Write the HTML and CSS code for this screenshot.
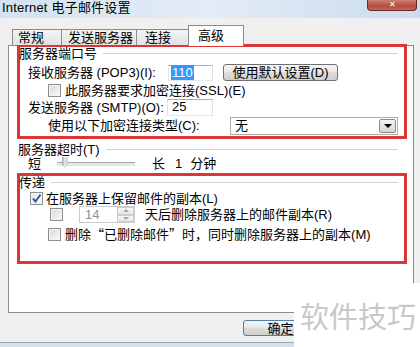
FILE: index.html
```html
<!DOCTYPE html>
<html lang="zh-CN">
<head>
    <meta charset="UTF-8">
    <meta name="viewport" content="width=device-width, initial-scale=1.0">
    <title>Internet 电子邮件设置</title>
    <link rel="stylesheet" href="styles.css">
</head>
<body>
    <div class="window">
        <div class="titlebar">
            <span class="title">Internet 电子邮件设置</span>
            <span class="close-btn">✕</span>
        </div>
        <div class="dialog">
            <div class="tabs">
                <div class="tab tab-1">常规</div>
                <div class="tab tab-2">发送服务器</div>
                <div class="tab tab-3">连接</div>
                <div class="tab tab-active">高级</div>
            </div>
            <div class="panel">
                <div class="mark mark-ports">
                    <div class="legend"><span>服务器端口号</span><i class="legend-line"></i></div>
                    <div class="row row-pop">
                        <span class="lbl lbl-pop">接收服务器 (POP3)(I):</span>
                        <div class="input input-pop"><span class="sel">110</span></div>
                        <button class="btn btn-default">使用默认设置(D)</button>
                    </div>
                    <div class="row row-ssl">
                        <span class="checkbox"></span>
                        <span class="cb-text">此服务器要求加密连接(SSL)(E)</span>
                    </div>
                    <div class="row row-smtp">
                        <span class="lbl lbl-smtp">发送服务器 (SMTP)(O):</span>
                        <div class="input input-smtp">25</div>
                    </div>
                    <div class="row row-enc">
                        <span class="lbl lbl-enc">使用以下加密连接类型(C):</span>
                        <div class="select"><span>无</span><span class="select-arrow"></span></div>
                    </div>
                </div>

                <div class="legend legend-timeout"><span>服务器超时(T)</span><i class="legend-line"></i></div>
                <div class="row row-slider">
                    <span>短</span>
                    <div class="slider"><span class="slider-thumb"></span></div>
                    <span class="long">长</span>
                    <span class="num">1</span>
                    <span class="unit">分钟</span>
                </div>

                <div class="mark mark-deliver">
                    <div class="legend"><span>传递</span><i class="legend-line"></i></div>
                    <div class="row row-keep">
                        <span class="checkbox checked">
                            <svg width="11" height="11" viewBox="0 0 11 11"><path d="M2 5.5 L4.5 8.5 L9.5 1.5" fill="none" stroke="#3f5a9a" stroke-width="2"/></svg>
                        </span>
                        <span class="cb-text">在服务器上保留邮件的副本(L)</span>
                    </div>
                    <div class="row row-days">
                        <span class="checkbox"></span>
                        <div class="spin">
                            <span class="spin-value">14</span>
                            <span class="spin-btns">
                                <span class="spin-up"></span>
                                <span class="spin-down"></span>
                            </span>
                        </div>
                        <span class="days-text">天后删除服务器上的邮件副本(R)</span>
                    </div>
                    <div class="row row-del">
                        <span class="checkbox"></span>
                        <span class="cb-text">删除<span class="q">“</span>已删除邮件<span class="q">”</span>时，同时删除服务器上的副本(M)</span>
                    </div>
                </div>
            </div>
            <div class="footer">
                <button class="btn btn-ok">确定</button>
            </div>
        </div>
        <div class="frame-bottom"></div>
        <div class="watermark">软件技巧</div>
    </div>
</body>
</html>
```

FILE: styles.css
```css
* {
    box-sizing: border-box;
}
body {
    margin: 0;
    background-color: #f0f0f0;
    font-family: "Liberation Sans", "Noto Sans CJK SC", sans-serif;
    font-size: 13px;
    color: #000;
}
.window {
    position: relative;
    width: 420px;
    height: 347px;
    overflow: hidden;
}
.titlebar {
    display: flex;
    height: 18px;
    background: linear-gradient(90deg, #d3e2f1, #e2ecf6 50%, #cbdcee);
}
.title {
    padding: 1px 0 0 2px;
    font-size: 13px;
    line-height: 14px;
    letter-spacing: 0.2px;
}
.close-btn {
    margin-left: auto;
    margin-right: 3px;
    width: 50px;
    height: 11px;
    border: 1px solid #6e2a22;
    border-top: none;
    border-radius: 0 0 4px 4px;
    background: linear-gradient(#c9806f, #b44d3f 60%, #c76454);
    color: #fff;
    font-size: 8px;
    line-height: 10px;
    text-align: center;
}
.dialog {
    height: 324px;
    padding: 7px 6px 0 8px;
    background-color: #f0f0f0;
}
.tabs {
    display: flex;
    align-items: flex-end;
    height: 20px;
    padding-left: 4px;
}
.tab {
    height: 16px;
    border: 1px solid #898c95;
    border-bottom: none;
    background: linear-gradient(#f3f3f3, #e2e2e2);
    padding-left: 6px;
    line-height: 15px;
    white-space: nowrap;
}
.tab-1 {
    width: 50px;
    padding-left: 5px;
}
.tab-2 {
    width: 76px;
    margin-left: -1px;
}
.tab-3 {
    width: 53px;
    margin-left: -1px;
    padding-left: 8px;
}
.tab-active {
    position: relative;
    z-index: 1;
    width: 56px;
    height: 21px;
    margin-left: -1px;
    margin-bottom: -1px;
    padding: 2px 0 0 9px;
    background: #fff;
}
.panel {
    height: 268px;
    border: 1px solid #898c95;
    background-color: #fff;
}
.mark {
    width: 390px;
    margin-left: 8px;
    border: 3px solid #dd3535;
}
.mark-ports {
    height: 95px;
    margin-top: -2px;
}
.mark-deliver {
    height: 91px;
    margin-top: 2px;
}
.legend {
    display: flex;
    align-items: center;
    height: 14px;
    line-height: 14px;
    white-space: nowrap;
}
.mark .legend span {
    margin-left: -1px;
}
.legend-line {
    flex: 1;
    height: 1px;
    margin: 0 6px 1px 6px;
    background-color: #cfd5db;
}
.legend-timeout {
    width: 380px;
    height: 13px;
    margin: 4px 0 0 9px;
}
.legend-timeout .legend-line {
    margin-right: 0;
}
.row {
    display: flex;
    align-items: center;
    white-space: nowrap;
    line-height: 14px;
}
.lbl {
    flex: none;
}
.row-pop {
    height: 17px;
    margin-top: 3px;
    padding-left: 8px;
}
.lbl-pop {
    width: 140px;
}
.input {
    height: 16px;
    border: 1px solid;
    border-color: #abadb3 #dbdfe6 #e3e9ef #e2e3ea;
    background-color: #fff;
    padding-left: 2px;
    line-height: 14px;
}
.input-pop {
    width: 45px;
}
.sel {
    padding: 0 1px;
    background-color: #3399ff;
    color: #fff;
}
.btn {
    font-family: inherit;
    font-size: 13px;
    color: #000;
    border: 1px solid #707070;
    border-radius: 3px;
    background: linear-gradient(#f4f4f4, #ebebeb 45%, #dddddd 50%, #cfcfcf);
    padding: 0;
    line-height: 13px;
}
.btn-default {
    width: 115px;
    height: 17px;
    margin-left: 10px;
}
.row-ssl {
    height: 13px;
    margin-top: 3px;
    padding-left: 28px;
}
.checkbox {
    flex: none;
    display: flex;
    align-items: center;
    justify-content: center;
    width: 13px;
    height: 13px;
    border: 1px solid #8e8f8f;
    background: linear-gradient(135deg, #d8d8d8, #fbfbfb);
    box-shadow: inset 0 0 0 1px #f4f4f4;
}
.checked {
    background: linear-gradient(135deg, #e4e9f2, #fbfbfb);
}
.row-ssl .cb-text {
    margin-left: 4px;
}
.row-smtp {
    height: 17px;
    margin-top: 2px;
    padding-left: 8px;
}
.lbl-smtp {
    width: 139px;
}
.input-smtp {
    width: 46px;
    height: 17px;
    padding-left: 4px;
}
.row-enc {
    height: 18px;
    margin-top: 1px;
    padding-left: 28px;
}
.lbl-enc {
    width: 182px;
}
.select {
    display: flex;
    align-items: center;
    width: 168px;
    height: 18px;
    border: 1px solid #abadb3;
    background-color: #fff;
    padding-left: 4px;
}
.select-arrow {
    display: flex;
    align-items: center;
    justify-content: center;
    margin-left: auto;
    margin-right: 1px;
    width: 17px;
    height: 14px;
    border: 1px solid #8a8a8a;
    border-radius: 2px;
    background: linear-gradient(#f5f5f5, #d4d4d4);
}
.select-arrow::after {
    content: "";
    border-left: 4px solid transparent;
    border-right: 4px solid transparent;
    border-top: 4px solid #000;
}
.row-slider {
    height: 14px;
    margin-top: 1px;
    padding-left: 19px;
}
.slider {
    position: relative;
    width: 78px;
    height: 14px;
    margin-left: 16px;
}
.slider::before {
    content: "";
    position: absolute;
    left: 0;
    right: 0;
    top: 5px;
    height: 3px;
    border-top: 1px solid #a8a8a8;
    border-bottom: 1px solid #fff;
    background-color: #e6e6e6;
}
.slider-thumb {
    position: absolute;
    left: 5px;
    top: 0;
    width: 6px;
    height: 11px;
    background: linear-gradient(90deg, #9a9a9a, #e4e4e4 40%, #cfcfcf);
    clip-path: polygon(0 0, 100% 0, 100% 70%, 50% 100%, 0 70%);
}
.long {
    margin-left: 17px;
}
.num {
    margin-left: 10px;
}
.unit {
    margin-left: 8px;
}
.row-keep {
    height: 13px;
    margin-top: 2px;
    padding-left: 10px;
}
.row-keep .cb-text {
    margin-left: 3px;
}
.row-days {
    height: 17px;
    margin-top: 1px;
    padding-left: 30px;
}
.spin {
    display: flex;
    width: 56px;
    height: 17px;
    margin-left: 16px;
    border: 1px solid #c9ccd1;
    background-color: #fff;
}
.spin-value {
    flex: 1;
    padding-left: 5px;
    color: #8f8f8f;
    line-height: 15px;
}
.spin-btns {
    display: flex;
    flex-direction: column;
    width: 17px;
}
.spin-up,
.spin-down {
    display: flex;
    align-items: center;
    justify-content: center;
    flex: 1;
    border: 1px solid #cdcdcd;
    background: linear-gradient(#f7f7f7, #e8e8e8);
}
.spin-up::after {
    content: "";
    border-left: 3px solid transparent;
    border-right: 3px solid transparent;
    border-bottom: 3px solid #a5a5a5;
}
.spin-down::after {
    content: "";
    border-left: 3px solid transparent;
    border-right: 3px solid transparent;
    border-top: 3px solid #a5a5a5;
}
.days-text {
    margin-left: 10px;
}
.row-del {
    height: 13px;
    margin-top: 5px;
    padding-left: 28px;
}
.row-del .cb-text {
    margin-left: 4px;
}
.q {
    font-family: "Noto Sans CJK SC", sans-serif;
}
.footer {
    padding: 7px 0 0 235px;
}
.btn-ok {
    width: 75px;
    height: 16px;
    border-color: #4f7fab;
}
.frame-bottom {
    height: 5px;
    border-top: 1px solid #9aa9b8;
    background-color: #d3e0ee;
}
.watermark {
    position: absolute;
    right: 0;
    bottom: 0;
    width: 126px;
    height: 64px;
    padding-left: 6px;
    background-color: #fff;
    color: #c8c8c8;
    font-family: "Noto Sans CJK SC", sans-serif;
    font-size: 29px;
    line-height: 64px;
    white-space: nowrap;
}
```
